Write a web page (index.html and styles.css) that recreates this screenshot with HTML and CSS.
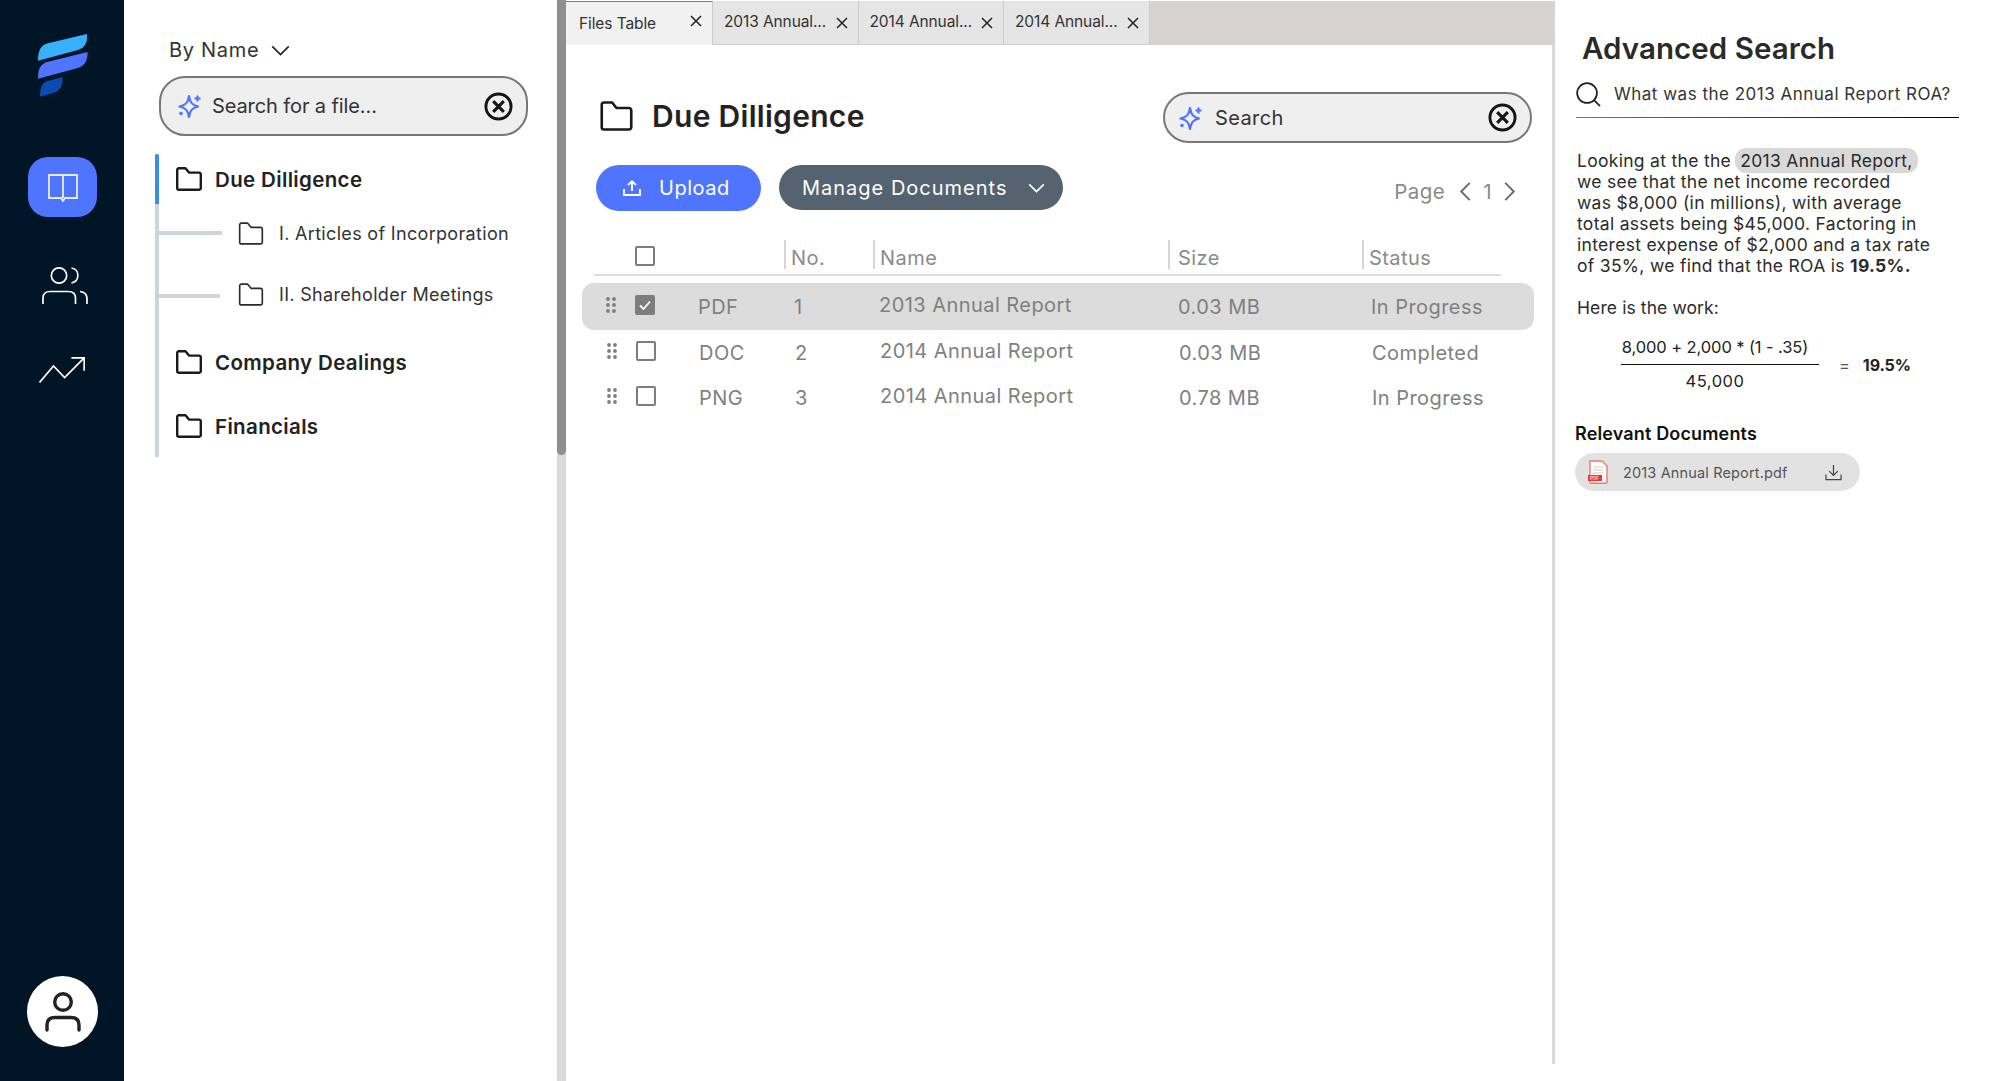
FILE: index.html
```html
<!DOCTYPE html>
<html lang="en">
<head>
<meta charset="utf-8">
<title>Due Dilligence</title>
<link rel="stylesheet" href="styles.css">
</head>
<body>
<svg class="defs" width="0" height="0" aria-hidden="true">
  <defs>
    <symbol id="folder" viewBox="0 0 26 24"><path d="M1.2 3.2 V21 a1.8 1.8 0 0 0 1.8 1.8 H23 a1.8 1.8 0 0 0 1.8-1.8 V7.4 a1.8 1.8 0 0 0-1.8-1.8 H13 L9.5 1.2 H3 a1.8 1.8 0 0 0-1.8 2 Z" fill="none" stroke="currentColor" stroke-linejoin="round"/></symbol>
    <symbol id="spark" viewBox="0 0 24 24"><path d="M11 2 C12 8.5 14 11 20 12.5 C14 14 12 16.5 11 23 C10 16.5 8 14 1.5 12.5 C8 11 10 8.5 11 2 Z" fill="none" stroke="#4f75ff" stroke-width="2.2" stroke-linejoin="round"/><path d="M19.5 1.5 V7.5 M16.5 4.5 H22.5" stroke="#4f75ff" stroke-width="2.2"/><circle cx="3" cy="19.5" r="1.8" fill="#4f75ff"/></symbol>
    <symbol id="clear" viewBox="0 0 30 30"><circle cx="15" cy="15" r="13" fill="none" stroke="#151515" stroke-width="3"/><path d="M9.5 9.5 L20.5 20.5 M20.5 9.5 L9.5 20.5" stroke="#151515" stroke-width="3.2"/></symbol>
    <symbol id="cross" viewBox="0 0 14 14"><path d="M2 2 L12 12 M12 2 L2 12" stroke="#222" stroke-width="1.5"/></symbol>
    <symbol id="grip" viewBox="0 0 10 16"><g fill="#7d7d7d"><circle cx="2" cy="2" r="1.9"/><circle cx="8" cy="2" r="1.9"/><circle cx="2" cy="8" r="1.9"/><circle cx="8" cy="8" r="1.9"/><circle cx="2" cy="14" r="1.9"/><circle cx="8" cy="14" r="1.9"/></g></symbol>
  </defs>
</svg>
<div class="app">
  <nav class="rail">
    <svg class="logo" viewBox="0 0 50 63" width="50" height="63"><path d="M0 26.7 C0 16 3 11 10 9.3 L49 0 C50 9 46 14 40 16 Z" fill="#38b0ff"/><path d="M0 44.7 C0 34 3 30 9 28 L49.5 18 C50 27 46 32 40 34 Z" fill="#4f75ff"/><path d="M2 62.7 C2 53 4 49 9 47.3 L24.5 43 C25 52 22 56 17 58.5 Z" fill="#0a4cb0"/></svg>
    <a class="rail-active"><svg viewBox="0 0 30 29" width="30" height="29"><path d="M15 2 H29 V25 H17 L15 28 L13 25 H1 V2 Z M15 2 V25" fill="none" stroke="#e9eefc" stroke-width="1.8"/></svg></a>
    <svg class="rail-people" viewBox="0 0 46 37" width="46" height="37"><circle cx="17" cy="8.5" r="7.7" fill="none" stroke="#fff" stroke-width="1.7"/><path d="M29.5 1 C38 2 38 14 29.5 16 M1 37 V31 C1 27 4 24.5 8 24.5 H26 C31 24.5 33.5 27 33.5 31 V37 M38 24.5 C43.5 25 45 28 45 32 V37" fill="none" stroke="#fff" stroke-width="1.7"/></svg>
    <svg class="rail-trend" viewBox="0 0 46 26" width="46" height="26"><path d="M.5 25.5 L14.5 9 L25.6 20.5 L45.2 .8 M32.4 .8 H45.2 V13.7" fill="none" stroke="#fff" stroke-width="1.7"/></svg>
    <div class="avatar"><svg viewBox="0 0 36 40" width="36" height="40"><circle cx="18" cy="10" r="8.3" fill="none" stroke="#222" stroke-width="3.4"/><path d="M2 38 V33 C2 28 5 25.5 10 25.5 H26 C31 25.5 34 28 34 33 V38" fill="none" stroke="#222" stroke-width="3.4" stroke-linecap="round"/></svg></div>
  </nav>

  <aside class="sidebar">
    <div class="sort">By Name <svg viewBox="0 0 20 12" width="19" height="11"><path d="M1 1.5 L10 10.5 L19 1.5" fill="none" stroke="#222" stroke-width="1.8"/></svg></div>
    <div class="search search-side">
      <svg width="24" height="24"><use href="#spark"/></svg>
      <span class="search-text">Search for a file...</span>
      <svg class="search-clear" width="29" height="29"><use href="#clear"/></svg>
    </div>
    <div class="tree">
      <i class="tree-marker"></i>
      <div class="tree-item"><svg class="folder-bold" width="26" height="24"><use href="#folder"/></svg>Due Dilligence</div>
      <div class="tree-child tree-child1"><i class="branch branch1"></i><svg class="folder-thin" width="26" height="23"><use href="#folder"/></svg><span>I. Articles of Incorporation</span></div>
      <div class="tree-child tree-child2"><i class="branch branch2"></i><svg class="folder-thin" width="26" height="23"><use href="#folder"/></svg><span>II. Shareholder Meetings</span></div>
      <div class="tree-item tree-item3"><svg class="folder-bold" width="26" height="24"><use href="#folder"/></svg>Company Dealings</div>
      <div class="tree-item tree-item4"><svg class="folder-bold" width="26" height="24"><use href="#folder"/></svg>Financials</div>
    </div>
  </aside>

  <div class="scrollbar"><div class="scrollbar-thumb"></div></div>

  <main class="main">
    <div class="tabs">
      <div class="tab tab-active"><span class="tab-label">Files Table</span><svg class="tab-x-a" width="14" height="14"><use href="#cross"/></svg></div>
      <div class="tab"><span class="tab-label">2013 Annual...</span><svg width="14" height="14"><use href="#cross"/></svg></div>
      <div class="tab"><span class="tab-label">2014 Annual...</span><svg width="14" height="14"><use href="#cross"/></svg></div>
      <div class="tab"><span class="tab-label">2014 Annual...</span><svg width="14" height="14"><use href="#cross"/></svg></div>
    </div>
    <div class="content">
      <div class="title-row">
        <div class="title"><svg class="folder-title" width="33" height="30"><use href="#folder"/></svg>Due Dilligence</div>
        <div class="search search-main">
          <svg width="24" height="24"><use href="#spark"/></svg>
          <span class="search-text">Search</span>
          <svg class="search-clear" width="29" height="29"><use href="#clear"/></svg>
        </div>
      </div>
      <div class="toolbar">
        <button class="btn btn-upload"><svg viewBox="0 0 18 16" width="18" height="16"><path d="M9 11 V1.5 M5 5 L9 1.3 L13 5 M1 9 V15 H17 V9" fill="none" stroke="#fff" stroke-width="1.9"/></svg>Upload</button>
        <button class="btn btn-manage">Manage Documents<svg viewBox="0 0 18 11" width="17" height="10"><path d="M1 1.5 L9 9.5 L17 1.5" fill="none" stroke="#fff" stroke-width="1.9"/></svg></button>
        <div class="pager">Page
          <svg class="pager-prev" viewBox="0 0 12 20" width="12" height="19"><path d="M11 1 L2 10 L11 19" fill="none" stroke="#666" stroke-width="1.9"/></svg>
          <span class="pager-num">1</span>
          <svg viewBox="0 0 12 20" width="12" height="19"><path d="M1 1 L10 10 L1 19" fill="none" stroke="#666" stroke-width="1.9"/></svg>
        </div>
      </div>
      <div class="table">
        <div class="thead">
          <span></span>
          <span class="check"></span>
          <span></span>
          <span class="th">No.</span>
          <span class="th">Name</span>
          <span class="th th-size">Size</span>
          <span class="th">Status</span>
        </div>
        <div class="row row-selected">
          <svg class="lift" width="10" height="16"><use href="#grip"/></svg>
          <span class="check check-on lift"><svg viewBox="0 0 20 20" width="20" height="20"><path d="M5 10.5 L8.5 14 L15 6.5" fill="none" stroke="#fff" stroke-width="1.8"/></svg></span>
          <span>PDF</span><span class="cell-no">1</span><span class="cell-name lift">2013 Annual Report</span><span class="cell-size">0.03 MB</span><span class="cell-status">In Progress</span>
        </div>
        <div class="row row-two">
          <svg class="lift" width="10" height="16"><use href="#grip"/></svg>
          <span class="check lift"></span>
          <span>DOC</span><span class="cell-no">2</span><span class="cell-name lift">2014 Annual Report</span><span class="cell-size">0.03 MB</span><span class="cell-status">Completed</span>
        </div>
        <div class="row row-three">
          <svg class="lift" width="10" height="16"><use href="#grip"/></svg>
          <span class="check lift"></span>
          <span>PNG</span><span class="cell-no">3</span><span class="cell-name lift">2014 Annual Report</span><span class="cell-size">0.78 MB</span><span class="cell-status">In Progress</span>
        </div>
      </div>
    </div>
  </main>

  <section class="advanced">
    <h1 class="adv-title">Advanced Search</h1>
    <div class="adv-query">
      <svg viewBox="0 0 26 26" width="25" height="25"><circle cx="11.5" cy="11.5" r="10.3" fill="none" stroke="#222" stroke-width="1.8"/><path d="M18.8 18.8 L25 25" stroke="#222" stroke-width="1.8"/></svg>
      What was the 2013 Annual Report ROA?
    </div>
    <p class="adv-body">Looking at the the <mark class="chip">2013 Annual Report,</mark><br>we see that the net income recorded<br>was $8,000 (in millions), with average<br>total assets being $45,000. Factoring in<br>interest expense of $2,000 and a tax rate<br>of 35%, we find that the ROA is <b>19.5%.</b></p>
    <p class="adv-work">Here is the work:</p>
    <div class="formula">
      <div class="fraction"><span class="num">8,000 + 2,000 * (1 - .35)</span><span class="den">45,000</span></div>
      <span class="eq">=</span><b class="result">19.5%</b>
    </div>
    <h2 class="rel-title">Relevant Documents</h2>
    <div class="doc">
      <svg viewBox="0 0 20 24" width="20" height="24"><path d="M2 1 H14 L19 6 V22 a1.2 1.2 0 0 1-1.2 1.2 H3 a1.2 1.2 0 0 1-1.2-1.2 Z" fill="#fff" stroke="#f0786e" stroke-width="1.4"/><path d="M5 7 H15 M5 10 H15 M5 13 H15" stroke="#ddd" stroke-width="1.5"/><rect x="0" y="15" width="14" height="6" fill="#f0372c"/><text x="2" y="20" class="doc-badge">PDF</text></svg>
      <span class="doc-name">2013 Annual Report.pdf</span>
      <svg class="doc-dl" viewBox="0 0 18 18" width="17" height="17"><path d="M9 1 V11.5 M4.5 7.5 L9 12 L13.5 7.5 M1 11 V16.5 H17 V11" fill="none" stroke="#444" stroke-width="1.3"/></svg>
    </div>
  </section>
</div>
</body>
</html>
```

FILE: styles.css
```css
* { box-sizing: border-box; }
html, body { margin: 0; height: 100%; }
body { background: #fff; font-family: Inter, "Open Sans", sans-serif; color: #222; overflow: hidden; }
.defs { display: block; height: 0; }
svg { display: block; flex: none; }
.app { display: flex; height: 1081px; width: 1995px; padding-top: 1px; }

/* nav rail */
.rail { width: 124px; flex: none; margin-top: -1px; background: #001526; display: flex; flex-direction: column; align-items: center; padding-top: 34px; }
.logo { margin-left: 1px; }
.rail-active { display: flex; align-items: center; justify-content: center; width: 69px; height: 60px; margin-top: 60px; margin-left: 1px; background: #4f75ff; border-radius: 20px; }
.rail-people { margin-top: 50px; margin-left: 6px; }
.rail-trend { margin-top: 53px; margin-left: -1px; }
.avatar { margin-top: auto; margin-bottom: 34px; margin-left: 1px; width: 71px; height: 71px; border-radius: 50%; background: #fff; display: flex; align-items: center; justify-content: center; }

/* sidebar */
.sidebar { width: 433px; flex: none; padding: 37px 0 0 31px; }
.sort { display: flex; align-items: center; gap: 12px; margin-left: 14px; height: 24px; font-size: 20px; letter-spacing: .7px; color: #333; }
.search { display: flex; align-items: center; background: #efefef; border: 2px solid #777; }
.search-side { width: 369px; height: 60px; margin-left: 4px; margin-top: 14px; border-radius: 26px; padding: 0 13px 0 17px; }
.search-main { width: 369px; height: 51px; border-radius: 26px; padding: 0 13px 0 14px; }
.search-text { font-size: 20px; color: #333; margin-left: 10px; letter-spacing: -.1px; }
.search-main .search-text { margin-left: 12px; letter-spacing: .4px; }
.search-clear { margin-left: auto; }

.tree { margin-top: 18px; position: relative; width: 360px; height: 303px; background: linear-gradient(#cbd5df, #cbd5df) left top / 4px 100% no-repeat; padding: 13px 0 0 21px; }
.tree-marker { position: absolute; left: 0; top: 0; width: 4px; height: 50px; background: #3a8ee6; border-radius: 2px 2px 0 0; }
.tree-item { display: flex; align-items: center; gap: 13px; height: 24px; font-size: 20.5px; font-weight: 600; letter-spacing: .35px; color: #222; white-space: nowrap; }
.folder-bold { stroke-width: 2.4px; color: #1a1a1a; }
.folder-thin { stroke-width: 1.7px; color: #2a2a2a; }
.folder-title { stroke-width: 2.1px; color: #1a1a1a; }
.tree-child { display: flex; align-items: center; height: 23px; margin-left: 62px; position: relative; gap: 15px; font-size: 18px; letter-spacing: .32px; color: #333; white-space: nowrap; }
.tree-child1 { margin-top: 31px; }
.tree-child2 { margin-top: 38px; }
.branch { position: absolute; left: -79px; width: 63px; height: 4px; background: #cbd5df; }
.branch1 { top: 9px; }
.branch2 { top: 11px; width: 61px; }
.tree-item3 { margin-top: 44px; }
.tree-item4 { margin-top: 40px; }

.scrollbar { width: 9px; flex: none; background: #d9d9d9; margin-top: -1px; }
.scrollbar-thumb { height: 455px; background: #8f8f8f; border-radius: 0 0 5px 5px; }

/* main */
.main { width: 989px; flex: none; height: 1063px; border-right: 3px solid #d9d9d9; }
.tabs { display: flex; height: 44px; width: 989px; background: #d7d3d2; }
.tab { display: flex; align-items: center; width: 145.5px; height: 44px; padding: 0 9px 0 11px; justify-content: space-between; background: #e5e5e5; border-right: 1px solid #ccc; border-bottom: 1px solid #ccc; font-size: 15.5px; letter-spacing: -.1px; color: #333; white-space: nowrap; }
.tab-label { margin-top: -3px; }
.tab-active { width: 147px; padding: 0 9px 0 13px; border-top: 1px solid #4f75ff; background: #f1f1f1; border-bottom: 0; }
.tab-active .tab-label { margin-top: -1px; }
.tab-x-a { margin-top: -5px; }

.content { padding: 47px 20px 0 16px; }
.title-row { display: flex; align-items: center; justify-content: space-between; height: 51px; }
.title { display: flex; align-items: center; gap: 19px; margin: -3px 0 0 18px; font-size: 30px; font-weight: 600; letter-spacing: .3px; color: #222; white-space: nowrap; }
.toolbar { display: flex; align-items: flex-start; gap: 18px; margin-top: 22px; margin-left: 14px; height: 46px; }
.btn { display: flex; align-items: center; height: 46px; border: 0; border-radius: 24px; color: #fff; font: 400 20px Inter, sans-serif; letter-spacing: .5px; white-space: nowrap; }
.btn-upload { width: 165px; background: #4f75ff; padding: 0 0 0 27px; gap: 18px; }
.btn-manage { width: 284px; height: 45px; background: #54636f; padding: 0 18px 0 23px; justify-content: space-between; letter-spacing: 1px; }
.pager { display: flex; align-items: center; height: 46px; margin-left: auto; margin-right: 16px; font-size: 20.5px; letter-spacing: .45px; color: #8a8a8a; margin-top: 3px; }
.pager-prev { margin-left: 14px; }
.pager-num { margin: 0 12px; }

/* table */
.table { margin-top: 29px; font-size: 20px; letter-spacing: .45px; color: #808080; }
.thead, .row { display: grid; grid-template-columns: 29px 63px 86px 89px 295px 194px 1fr; }
.thead { margin-left: 12px; width: 907px; height: 36px; padding-left: 12px; border-bottom: 2px solid #ddd; align-items: start; }
.thead .check { margin-top: 6px; }
.th { padding-left: 5px; height: 29px; line-height: 36px; border-left: 2px solid #d5d5d5; color: #8a8a8a; white-space: nowrap; }
.th-size { padding-left: 8px; }
.row { width: 952px; align-items: center; padding-left: 25px; white-space: nowrap; }
.row-selected { height: 47px; margin-top: 7px; padding-left: 24px; background: #dcdcdc; border-radius: 12px; }
.row-two { height: 46px; }
.row-three { height: 44px; }
.lift { margin-top: -4px; }
.check { display: block; width: 20px; height: 20px; border: 2px solid #7d7d7d; border-radius: 2px; }
.check-on { background: #7d7d7d; }
.check-on svg { margin: -2px 0 0 -2px; }
.cell-name { padding-left: 6px; }
.cell-no, .cell-size { padding-left: 10px; }
.cell-status { padding-left: 9px; }

/* advanced search */
.advanced { flex: 1; padding: 0 0 0 21px; }
.adv-title { margin: 31px 0 0 6px; font-size: 29.5px; font-weight: 600; line-height: 32px; color: #2a2a2a; letter-spacing: .05px; white-space: nowrap; }
.adv-query { display: flex; align-items: center; gap: 13px; margin-top: 17px; width: 383px; height: 37px; padding-bottom: 10px; border-bottom: 1px solid; border-image: linear-gradient(90deg, #777, #000) 1; font-size: 17px; letter-spacing: .5px; color: #333; white-space: nowrap; }
.adv-body { margin: 32px 0 0 1px; font-size: 17.5px; line-height: 21px; letter-spacing: .3px; color: #2b2b2b; white-space: nowrap; }
.chip { background: #d9d9d9; color: inherit; border-radius: 11px; padding: 2px 5px; margin-left: -1px; }
.adv-work { margin: 21px 0 0 1px; font-size: 17.5px; line-height: 21px; letter-spacing: .1px; color: #2b2b2b; }
.formula { display: flex; align-items: center; margin: 19px 0 0 45px; font-size: 16.5px; letter-spacing: -.1px; }
.fraction { display: flex; flex-direction: column; align-items: center; width: 198px; }
.num { display: block; width: 100%; text-align: center; padding: 0 10px 6px 0; border-bottom: 1px solid #111; line-height: 21px; }
.den { line-height: 21px; margin-top: 6px; padding-right: 10px; letter-spacing: .5px; }
.eq { margin-left: 20px; color: #555; }
.result { margin-left: 13px; font-size: 16px; }
.rel-title { margin: 30px 0 0 -1px; font-size: 18px; line-height: 24px; font-weight: 600; color: #111; letter-spacing: .15px; white-space: nowrap; }
.doc { display: flex; align-items: center; width: 285px; height: 38px; margin: 7px 0 0 -1px; background: #e2e2e2; border-radius: 19px; padding: 0 18px 0 13px; }
.doc-name { margin-left: 15px; font-size: 14.5px; letter-spacing: .15px; color: #555; white-space: nowrap; }
.doc-badge { font-size: 4.5px; fill: #fff; }
.doc-dl { margin-left: auto; }
```
